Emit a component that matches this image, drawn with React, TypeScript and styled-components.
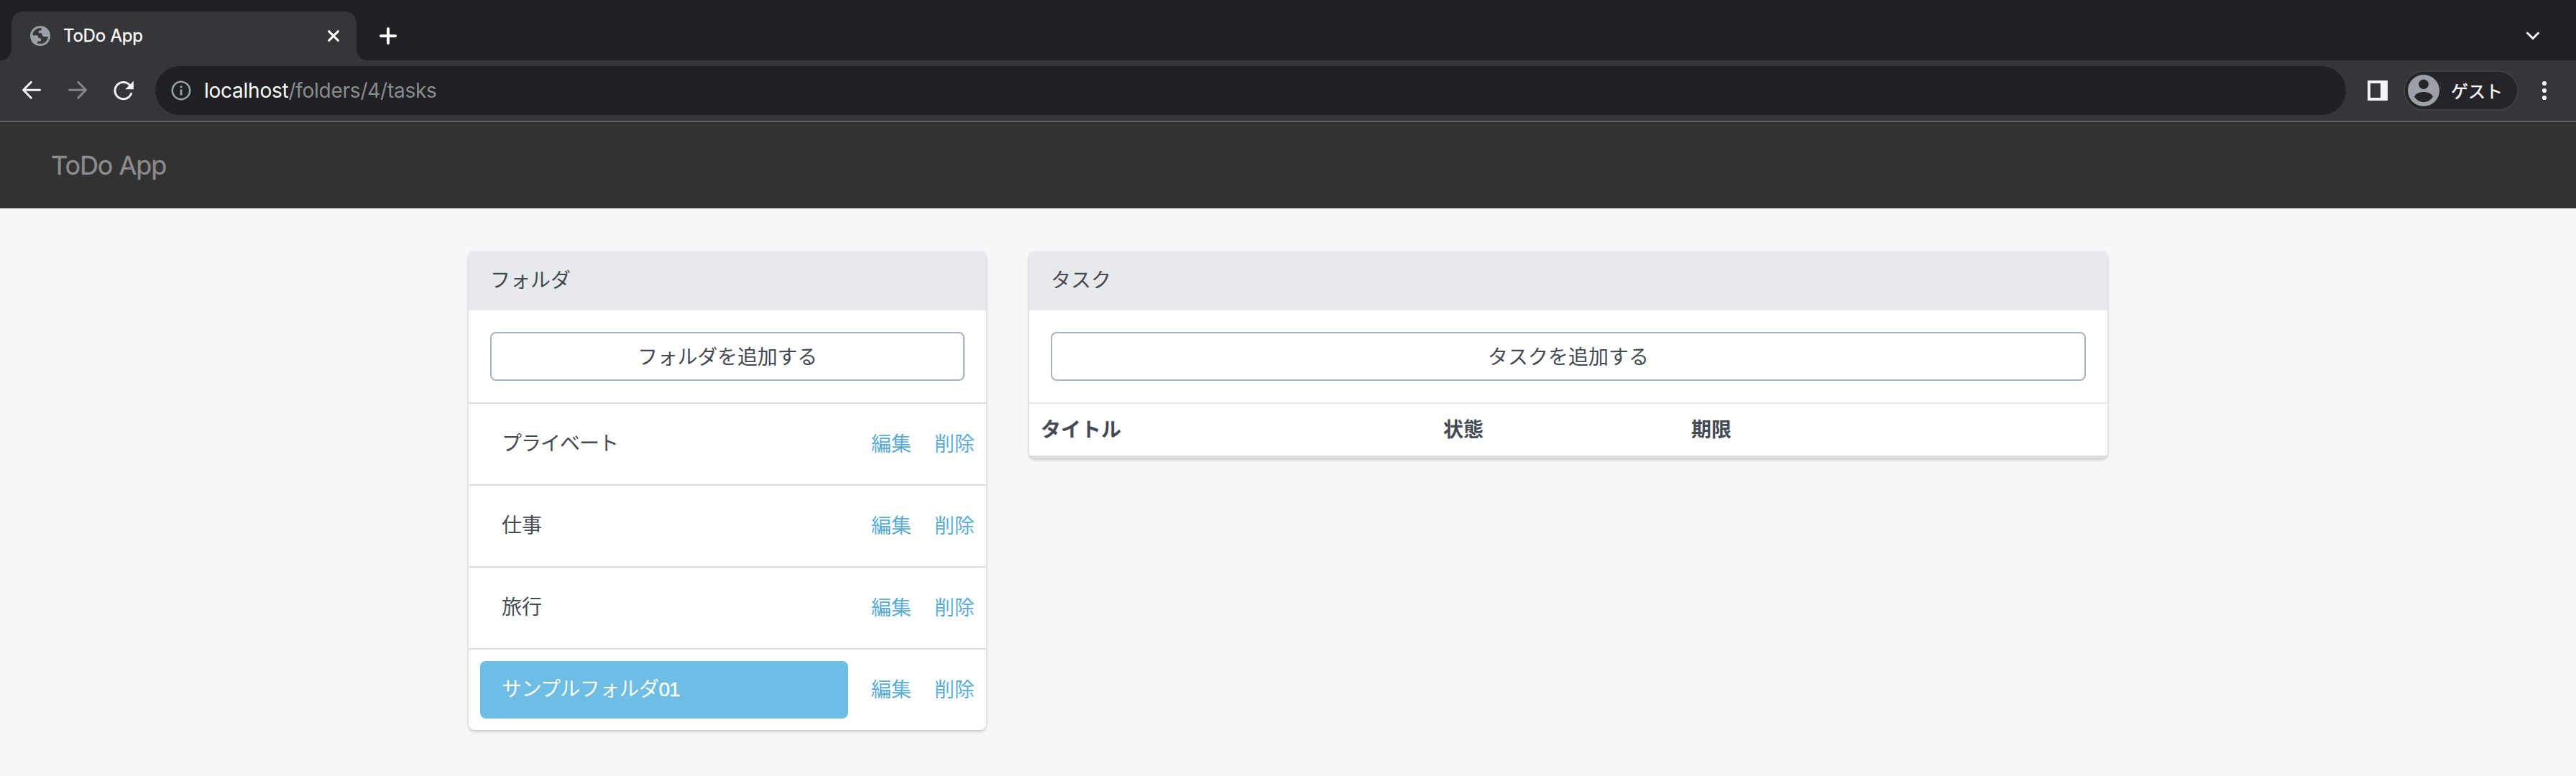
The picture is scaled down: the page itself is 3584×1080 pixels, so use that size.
import React from "react";
import styled, { createGlobalStyle, css } from "styled-components";

const chromeFont = `Inter, "Noto Sans CJK JP", sans-serif`;
const pageFont = `"Noto Sans CJK JP", "Liberation Sans", sans-serif`;

const GlobalStyle = createGlobalStyle`
  *, *::before, *::after { box-sizing: border-box; }
  html { background: #f5f7f9; }
  body { margin: 0; min-height: 1080px; background: #f5f7f9; color: #434a54; font-family: ${pageFont}; font-size: 28px; line-height: 40px; }
`;

const TabStrip = styled.div`
  display: flex;
  align-items: flex-end;
  height: 84px;
  background: #202124;
`;

const Flare = styled.div<{ $side: "left" | "right" }>`
  width: 16px;
  height: 16px;
  background: radial-gradient(circle at ${(p) => (p.$side === "left" ? "0" : "100%")} 0, transparent 15.5px, #35363a 16.5px);
`;

const Tab = styled.div`
  display: flex;
  align-items: center;
  width: 480px;
  height: 68px;
  padding: 0 23px 0 26px;
  border-radius: 16px 16px 0 0;
  background: #35363a;
  color: #fff;
`;

const TabTitle = styled.span`
  flex: 1;
  margin-left: 18px;
  font: 400 24px/32px ${chromeFont};
  letter-spacing: -0.2px;
  -webkit-text-stroke: 0.3px #fff;
`;

const Glyph = styled.svg`
  display: block;
  flex: none;
  fill: none;
  stroke: currentColor;
  stroke-linecap: round;
`;

const StripActions = styled.div`
  display: flex;
  flex: 1;
  align-items: center;
  justify-content: space-between;
  height: 68px;
  padding: 0 50px 0 14px;
  color: #fff;
`;

const Toolbar = styled.div`
  display: flex;
  align-items: center;
  height: 86px;
  padding-left: 30px;
  background: #35363a;
  border-bottom: 2px solid #5f6368;
  color: #f1f3f4;
`;

const NavButtons = styled.div`
  display: flex;
  align-items: center;
  gap: 36px;
  width: 186px;
`;

const Omnibox = styled.div`
  display: flex;
  flex: 1;
  align-items: center;
  height: 68px;
  padding-left: 22px;
  border-radius: 34px;
  background: #202124;
  color: #9aa0a6;
`;

const Url = styled.span`
  margin-left: 18px;
  font: 400 28px/36px ${chromeFont};
  letter-spacing: -0.25px;
  color: #8b8c8e;
`;

const Host = styled.span`
  color: #fff;
`;

const ToolbarEnd = styled.div`
  display: flex;
  align-items: center;
  width: 320px;
  padding-left: 30px;
`;

const Profile = styled.div`
  display: flex;
  align-items: center;
  width: 160px;
  height: 56px;
  margin: 0 32px 0 22px;
  padding-left: 4px;
  border: 2px solid #3f4044;
  border-radius: 28px;
  background: #252429;
  color: #fff;
`;

const ProfileName = styled.span`
  margin-left: 16px;
  font: 400 24px/32px "Noto Sans CJK JP", sans-serif;
  -webkit-text-stroke: 0.4px #fff;
`;

const Header = styled.header`
  display: flex;
  align-items: center;
  height: 120px;
  padding: 0 0 1px 71px;
  background: #323232;
`;

const Brand = styled.a`
  font: 400 36px/44px Inter, sans-serif;
  letter-spacing: -1.05px;
  color: #8c8c8c;
  -webkit-text-stroke: 0.4px #8c8c8c;
`;

const Columns = styled.main`
  display: flex;
  align-items: flex-start;
  gap: 60px;
  width: 2280px;
  margin: 0 auto;
  padding-top: 60px;
`;

const Panel = styled.section<{ $width: number }>`
  width: ${(p) => p.$width}px;
  border-radius: 8px;
  background: #fff;
  box-shadow: 0 2px 4px rgba(0, 0, 0, 0.2), 0 0 2px rgba(0, 0, 0, 0.08);
`;

const PanelHeading = styled.h2`
  margin: 0;
  height: 82px;
  padding: 18px 30px 0;
  border-radius: 8px 8px 0 0;
  background: #e7e9ec;
  font-size: 28px;
  font-weight: 400;
  line-height: 40px;
`;

const PanelBody = styled.div`
  padding: 30px;
`;

const AddButton = styled.button<{ $tracking?: number }>`
  display: block;
  width: 100%;
  height: 68px;
  padding: 0 0 2px;
  border: 2px solid #aab2bd;
  border-radius: 8px;
  background: #fff;
  color: #434a54;
  font: 400 28px/40px ${pageFont};
  letter-spacing: ${(p) => p.$tracking ?? 0}px;
`;

const FolderList = styled.ul`
  margin: 0;
  padding: 0;
  list-style: none;
`;

const FolderRow = styled.li`
  display: flex;
  align-items: center;
  gap: 32px;
  height: 114px;
  padding: 0 16px;
  border-top: 2px solid #ddd;
`;

const FolderName = styled.a<{ $active?: boolean; $tracking?: number }>`
  flex: none;
  width: 512px;
  height: 80px;
  padding: 17px 30px 0;
  border-radius: 8px;
  letter-spacing: ${(p) => p.$tracking ?? 0}px;
  ${(p) =>
    p.$active &&
    css`
      background: #6dbde5;
      color: #fff;
    `}
`;

const Digits = styled.span`
  font-family: "Liberation Sans", sans-serif;
  letter-spacing: -1px;
  -webkit-text-stroke: 0.4px #fff;
`;

const RowLink = styled.a`
  padding-bottom: 5px;
  color: #5aacd8;
`;

const TaskTable = styled.div`
  display: grid;
  grid-template-columns: 560px 345px 1fr;
  height: 78px;
  border-top: 2px solid #e6e8ec;
  border-bottom: 4px solid #ddd;
`;

const TaskHead = styled.div`
  padding: 14px 16px 0;
  font-weight: 700;
`;

const folders = [
  { name: "プライベート", tracking: -1 },
  { name: "仕事" },
  { name: "旅行" },
  { name: "サンプルフォルダ", digits: "01", tracking: -0.6, active: true },
];

const GlobeIcon = () => (
  <Glyph width="28" height="28" viewBox="0 0 28 28">
    <path
      fill="#9aa0a6"
      fillRule="evenodd"
      stroke="none"
      d="M14 0a14 14 0 1 0 0 28a14 14 0 1 0 0-28Z M3.4 13.3C3.4 9 5.5 6 8.5 4.5C10.5 3.4 13 3 15.7 3V5Q15.7 6.5 14.2 6.5H13.2Q11.8 6.5 11.8 8V10H15Q16.7 10 16.7 12V13Q17 15 19 15H24.8C24.5 19.5 21.5 23.5 17.3 24.7H10.3V21.5H13.5Q15 21.5 15 20V18.5Q15 17 13.5 17H12.5Q11 17 11 15.5V14.8Q11 13.3 9.3 13.3Z"
    />
  </Glyph>
);

const ArrowIcon = ({ forward = false }: { forward?: boolean }) => (
  <Glyph width="28" height="28" viewBox="0 0 28 28" strokeWidth="3" strokeLinejoin="round" color={forward ? "#86878a" : "#f1f3f4"}>
    <path d={forward ? "M2.5 13.3H24.5M14.7 2.3L25.5 13.3L14.7 24.3" : "M25.5 13.3H3.5M13.3 2.3L2.5 13.3L13.3 24.3"} />
  </Glyph>
);

const ReloadIcon = () => (
  <Glyph width="28" height="28" viewBox="0 0 28 28" strokeWidth="3">
    <path d="M24.6 18.3A11.7 11.7 0 1 1 22.3 6.2" />
    <path d="M27.8 .8V12.2H16.3Z" fill="currentColor" stroke="none" />
  </Glyph>
);

export default function App() {
  return (
    <>
      <GlobalStyle />
      <TabStrip>
        <Flare $side="left" />
        <Tab>
          <GlobeIcon />
          <TabTitle>ToDo App</TabTitle>
          <Glyph width="18" height="18" viewBox="0 0 18 18" strokeWidth="3">
            <path d="M2.6 2.6L15.4 15.4M15.4 2.6L2.6 15.4" />
          </Glyph>
        </Tab>
        <Flare $side="right" />
        <StripActions>
          <Glyph width="28" height="28" viewBox="0 0 28 28" strokeWidth="4">
            <path d="M14 4V24M4 14H24" />
          </Glyph>
          <Glyph width="20" height="14" viewBox="0 0 20 14" strokeWidth="3">
            <path d="M2.5 3L10 10.5L17.5 3" />
          </Glyph>
        </StripActions>
      </TabStrip>
      <Toolbar>
        <NavButtons>
          <ArrowIcon />
          <ArrowIcon forward />
          <ReloadIcon />
        </NavButtons>
        <Omnibox>
          <Glyph width="28" height="28" viewBox="0 0 28 28" strokeWidth="2.6">
            <circle cx="14" cy="14" r="12.2" />
            <path d="M12.6 12.5H15.4V20.5H12.6ZM12.6 7.5H15.4V10.2H12.6Z" fill="currentColor" stroke="none" />
          </Glyph>
          <Url>
            <Host>localhost</Host>/folders/4/tasks
          </Url>
        </Omnibox>
        <ToolbarEnd>
          <Glyph width="28" height="28" viewBox="0 0 28 28">
            <path fill="currentColor" stroke="none" fillRule="evenodd" d="M0 0H28V28H0ZM4 4V24H18V4Z" />
          </Glyph>
          <Profile>
            <Glyph width="44" height="44" viewBox="0 0 44 44">
              <circle cx="22" cy="22" r="22" fill="#9aa0a6" stroke="none" />
              <circle cx="22" cy="13.3" r="6.8" fill="#252429" stroke="none" />
              <path d="M9 30.5C11 26 17 24 22 24S33 26 35 30.5C32 35.5 27 38 22 38S12 35.5 9 30.5Z" fill="#252429" stroke="none" />
            </Glyph>
            <ProfileName>ゲスト</ProfileName>
          </Profile>
          <Glyph width="8" height="28" viewBox="0 0 8 28">
            <g fill="currentColor" stroke="none">
              <circle cx="4" cy="4" r="3.1" />
              <circle cx="4" cy="14" r="3.1" />
              <circle cx="4" cy="24" r="3.1" />
            </g>
          </Glyph>
        </ToolbarEnd>
      </Toolbar>
      <Header>
        <Brand>ToDo App</Brand>
      </Header>
      <Columns>
        <Panel $width={720}>
          <PanelHeading>フォルダ</PanelHeading>
          <PanelBody>
            <AddButton $tracking={-0.2}>フォルダを追加する</AddButton>
          </PanelBody>
          <FolderList>
            {folders.map((f) => (
              <FolderRow key={f.name}>
                <FolderName $active={f.active} $tracking={f.tracking}>
                  {f.name}
                  {f.digits && <Digits>{f.digits}</Digits>}
                </FolderName>
                <RowLink>編集</RowLink>
                <RowLink>削除</RowLink>
              </FolderRow>
            ))}
          </FolderList>
        </Panel>
        <Panel $width={1500}>
          <PanelHeading>タスク</PanelHeading>
          <PanelBody>
            <AddButton>タスクを追加する</AddButton>
          </PanelBody>
          <TaskTable>
            <TaskHead>タイトル</TaskHead>
            <TaskHead>状態</TaskHead>
            <TaskHead>期限</TaskHead>
          </TaskTable>
        </Panel>
      </Columns>
    </>
  );
}
